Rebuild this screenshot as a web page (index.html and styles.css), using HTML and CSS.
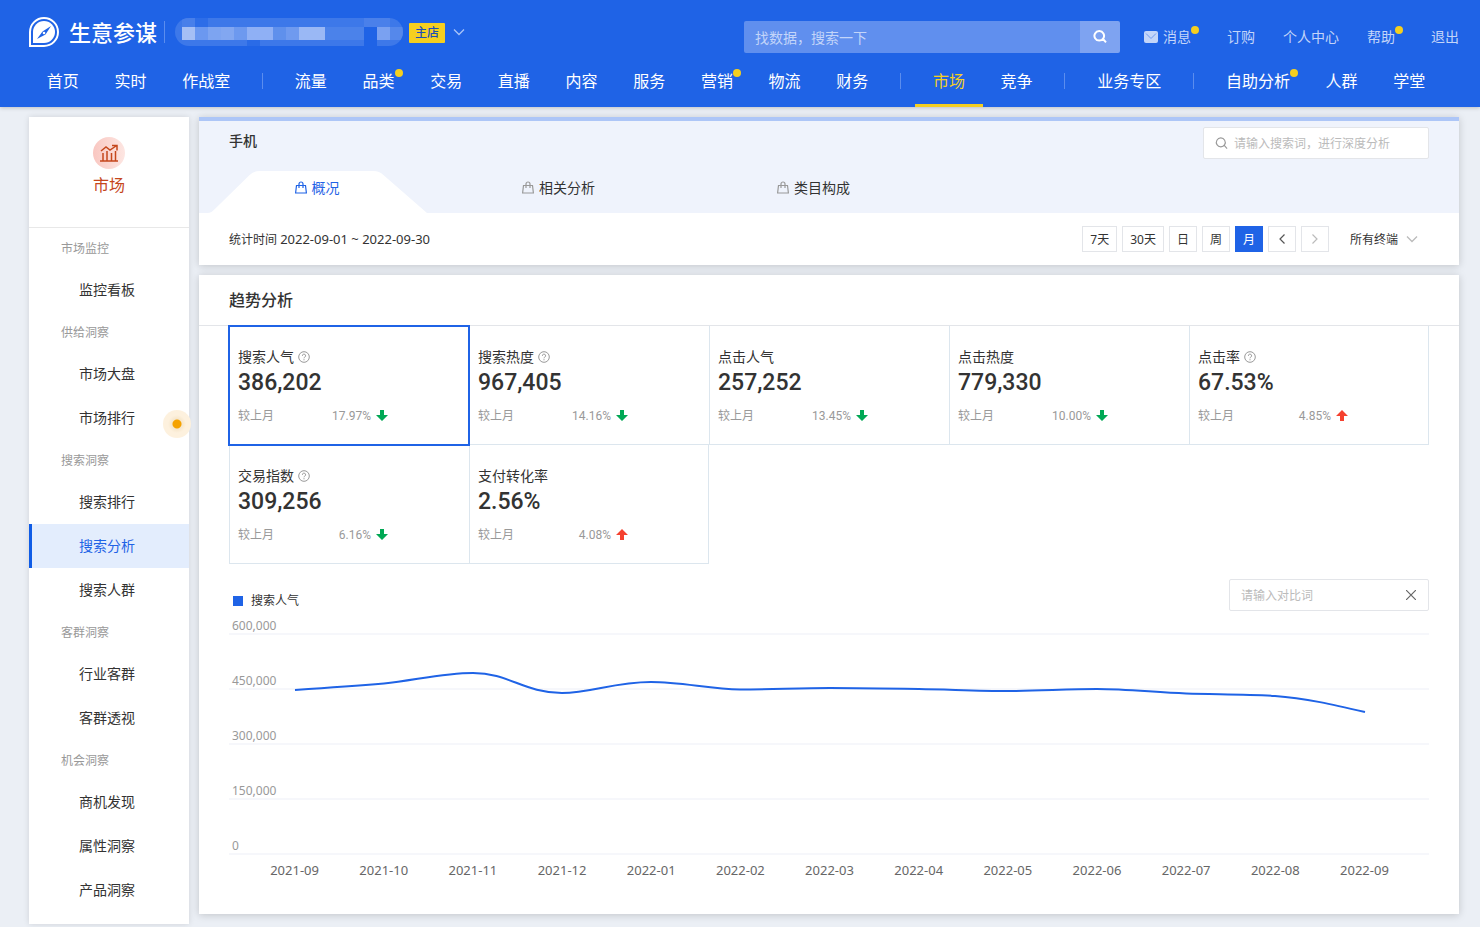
FILE: index.html
```html
<!DOCTYPE html>
<html lang="zh-CN">
<head>
  <meta charset="UTF-8">
  <title>生意参谋 - 搜索分析</title>
  <link rel="stylesheet" href="styles.css">
</head>
<body>
<svg class="defs" aria-hidden="true">
  <symbol id="bag" viewBox="0 0 12 13">
    <path d="M1.5 4.5h9l.9 7.5H.6z M4 7V3a2 2 0 0 1 4 0v4" fill="none" stroke="currentColor" stroke-width="1.2"/>
  </symbol>
  <symbol id="help" viewBox="0 0 12 12">
    <circle cx="6" cy="6" r="5.3" fill="none" stroke="currentColor"/>
    <path d="M4.4 4.8a1.6 1.6 0 1 1 2.4 1.3q-.8.4-.8 1.2M6 8.2v1.1" fill="none" stroke="currentColor"/>
  </symbol>
  <symbol id="down" viewBox="0 0 12 12">
    <path d="M4 0h4v5h4L6 11 0 5h4z" fill="#00a854"/>
  </symbol>
  <symbol id="up" viewBox="0 0 12 12">
    <path d="M4 11h4V6h4L6 0 0 6h4z" fill="#f5412f"/>
  </symbol>
  <symbol id="search" viewBox="0 0 14 14">
    <path d="M10 9l3 3.400M6.200 1a4.800 4.800 0 1 0 .1 0z" fill="none" stroke="currentColor" stroke-width="var(--sw, 1.2)"/>
  </symbol>
  <symbol id="chevron" viewBox="0 0 12 8">
    <path d="M1 1.5l5 5 5-5" fill="none" stroke="currentColor" stroke-width="1.3"/>
  </symbol>
</svg>

<header class="header">
  <div class="header-top">
    <svg class="logo" viewBox="0 0 30 30">
      <path d="M1 29V15A14 14 0 1 1 15 29z" fill="none" stroke="#fff" stroke-width="2"/>
      <path d="M4 26V15a11 11 0 1 1 11 11z" fill="#fff"/>
      <path d="M22 9l-5.5 8.5-3-3z" fill="#1f63e6"/>
      <path d="M8 22l5.5-7.5 3 3z" fill="#1f63e6"/>
      <circle cx="15" cy="16" r="1.3" fill="#fff"/>
    </svg>
    <h1 class="brand">生意参谋</h1>
    <svg class="shop-name" viewBox="0 0 228 28">
      <clipPath id="pill"><rect width="228" height="28" rx="14"/></clipPath>
      <g clip-path="url(#pill)">
        <rect width="228" height="28" fill="#3d78e9"/>
        <rect x="20" width="13" height="9" fill="#2d6de8"/>
        <rect x="7" width="13" height="9" fill="#487fea"/>
        <rect x="189" width="26" height="9" fill="#4a80ea"/>
        <rect x="7" y="9" width="13" height="13" fill="#a5bff5"/>
        <rect x="20" y="9" width="13" height="13" fill="#6b98f0"/>
        <rect x="33" y="9" width="13" height="13" fill="#7da4f1"/>
        <rect x="46" y="9" width="26" height="13" fill="#82a7f1"/>
        <rect x="59" y="9" width="13" height="13" fill="#6d99ef"/>
        <rect x="72" y="9" width="26" height="13" fill="#8fb0f5"/>
        <rect x="98" y="9" width="13" height="13" fill="#5f90ec"/>
        <rect x="111" y="9" width="13" height="13" fill="#6f9aef"/>
        <rect x="124" y="9" width="26" height="13" fill="#9ab8f5"/>
        <rect x="150" y="9" width="52" height="13" fill="#4b82ea"/>
        <rect x="189" y="9" width="13" height="19" fill="#1f63e6"/>
        <rect x="202" y="9" width="13" height="13" fill="#7aa1f1"/>
        <rect x="215" y="9" width="13" height="13" fill="#5588eb"/>
        <rect x="72" y="22" width="13" height="6" fill="#2a6be7"/>
      </g>
    </svg>
    <span class="shop-badge">主店</span>
    <button class="shop-toggle" aria-label="切换店铺"><svg class="chev"><use href="#chevron"/></svg></button>

    <form class="search">
      <input type="text" placeholder="找数据，搜索一下" aria-label="找数据">
      <button type="button" aria-label="搜索"><svg><use href="#search"/></svg></button>
    </form>
    <nav class="links">
      <a href="#" class="notice">
        <svg viewBox="0 0 14 12"><rect width="14" height="12" rx="2" fill="#c3d5f9"/><path d="M2 2.5l5 5 5-5" fill="none" stroke="#6f9aef"/></svg>
        <span class="dot">消息</span>
      </a>
      <a href="#">订购</a>
      <a href="#">个人中心</a>
      <a href="#" class="notice"><span class="dot">帮助</span></a>
      <a href="#">退出</a>
    </nav>
  </div>
  <nav class="main-nav">
    <a href="#">首页</a>
    <a href="#">实时</a>
    <a href="#">作战室</a>
    <i></i>
    <a href="#">流量</a>
    <a href="#"><span class="dot">品类</span></a>
    <a href="#">交易</a>
    <a href="#">直播</a>
    <a href="#">内容</a>
    <a href="#">服务</a>
    <a href="#"><span class="dot">营销</span></a>
    <a href="#">物流</a>
    <a href="#">财务</a>
    <i></i>
    <a href="#" class="active">市场</a>
    <a href="#">竞争</a>
    <i></i>
    <a href="#">业务专区</a>
    <i></i>
    <a href="#"><span class="dot">自助分析</span></a>
    <a href="#">人群</a>
    <a href="#">学堂</a>
  </nav>
</header>

<div class="page">
  <aside class="sidebar">
    <div class="side-head">
      <svg viewBox="0 0 32 32">
        <defs><linearGradient id="pink"><stop offset="0" stop-color="#f9c7c1"/><stop offset="1" stop-color="#fde6e2"/></linearGradient></defs>
        <circle cx="16" cy="16" r="16" fill="url(#pink)"/>
        <path d="M7 24h18M10 24v-8M14 24v-10M18.500 24v-8M22.500 24v-10M8 14l5-4 4 3 6-4M19 8.500h5v5" fill="none" stroke="#c5471c" stroke-width="1.500"/>
      </svg>
      <span>市场</span>
    </div>
    <nav class="side-nav">
      <h2>市场监控</h2>
      <a href="#">监控看板</a>
      <h2>供给洞察</h2>
      <a href="#">市场大盘</a>
      <a href="#" class="pulse">市场排行</a>
      <h2>搜索洞察</h2>
      <a href="#">搜索排行</a>
      <a href="#" class="active">搜索分析</a>
      <a href="#">搜索人群</a>
      <h2>客群洞察</h2>
      <a href="#">行业客群</a>
      <a href="#">客群透视</a>
      <h2>机会洞察</h2>
      <a href="#">商机发现</a>
      <a href="#">属性洞察</a>
      <a href="#">产品洞察</a>
    </nav>
  </aside>

  <main class="main">
    <section class="card overview">
      <div class="overview-head">
        <div class="overview-title">
          <h2>手机</h2>
          <label class="word-search">
            <svg><use href="#search"/></svg>
            <input type="text" placeholder="请输入搜索词，进行深度分析" aria-label="搜索词">
          </label>
        </div>
        <div class="tabs">
          <button class="tab active">
            <svg class="tab-bg" viewBox="0 0 222 42" preserveAspectRatio="none"><path d="M0 42C4 42 6 40 9 37L43 4Q47 0 53 0H168Q174 0 178 4L222 42z" fill="#fff"/></svg>
            <svg class="bag"><use href="#bag"/></svg><span>概况</span>
          </button>
          <button class="tab"><svg class="bag"><use href="#bag"/></svg><span>相关分析</span></button>
          <button class="tab"><svg class="bag"><use href="#bag"/></svg><span>类目构成</span></button>
        </div>
      </div>
      <div class="filters">
        <span class="period">统计时间 <time>2022-09-01 ~ 2022-09-30</time></span>
        <div class="ranges">
          <button>7天</button>
          <button>30天</button>
          <button>日</button>
          <button>周</button>
          <button class="active">月</button>
          <button aria-label="上一月"><svg viewBox="0 0 8 12"><path d="M6.500 1.500L2 6l4.500 4.500" fill="none" stroke="#555" stroke-width="1.200"/></svg></button>
          <button aria-label="下一月"><svg viewBox="0 0 8 12"><path d="M1.500 1.500L6 6l-4.500 4.500" fill="none" stroke="#bbb" stroke-width="1.200"/></svg></button>
        </div>
        <div class="terminal">
          <select aria-label="终端"><option>所有终端</option></select>
          <svg class="chev"><use href="#chevron"/></svg>
        </div>
      </div>
    </section>

    <section class="card trend">
      <h2 class="trend-title">趋势分析</h2>
      <div class="metrics">
        <button class="metric active">
          <span class="name">搜索人气<svg><use href="#help"/></svg></span>
          <strong>386,202</strong>
          <span class="compare">较上月<em>17.97%</em><svg><use href="#down"/></svg></span>
        </button>
        <button class="metric">
          <span class="name">搜索热度<svg><use href="#help"/></svg></span>
          <strong>967,405</strong>
          <span class="compare">较上月<em>14.16%</em><svg><use href="#down"/></svg></span>
        </button>
        <button class="metric">
          <span class="name">点击人气</span>
          <strong>257,252</strong>
          <span class="compare">较上月<em>13.45%</em><svg><use href="#down"/></svg></span>
        </button>
        <button class="metric">
          <span class="name">点击热度</span>
          <strong>779,330</strong>
          <span class="compare">较上月<em>10.00%</em><svg><use href="#down"/></svg></span>
        </button>
        <button class="metric end">
          <span class="name">点击率<svg><use href="#help"/></svg></span>
          <strong>67.53%</strong>
          <span class="compare">较上月<em>4.85%</em><svg><use href="#up"/></svg></span>
        </button>
        <button class="metric">
          <span class="name">交易指数<svg><use href="#help"/></svg></span>
          <strong>309,256</strong>
          <span class="compare">较上月<em>6.16%</em><svg><use href="#down"/></svg></span>
        </button>
        <button class="metric end">
          <span class="name">支付转化率</span>
          <strong>2.56%</strong>
          <span class="compare">较上月<em>4.08%</em><svg><use href="#up"/></svg></span>
        </button>
      </div>

      <div class="chart-bar">
        <span class="legend">搜索人气</span>
        <div class="compare-word">
          <input type="text" placeholder="请输入对比词" aria-label="对比词">
          <button aria-label="清空"><svg viewBox="0 0 10 10"><path d="M0 0l10 10M10 0L0 10" fill="none" stroke="#666" stroke-width="1.200"/></svg></button>
        </div>
      </div>
      <div class="plot">
        <div class="grid-row first">600,000</div>
        <div class="grid-row">450,000</div>
        <div class="grid-row">300,000</div>
        <div class="grid-row">150,000</div>
        <div class="grid-row">0</div>
        <svg class="line" viewBox="0 0 1200 220" preserveAspectRatio="none">
          <path d="M66 56C96 54 125 52 155 49.500C185 46.500 214 39 244 39C280 39 295 59 333 59C362 59 385 48 422 48C452 48 481 55 511 55.500C541 55.500 571 54 601 54C630 54 660 54.500 690 55C720 55.500 750 57 779 57C809 57 838 55 868 55C898 55 927 58.500 957 59.500C987 60.500 1017 60 1046 62C1076 64 1106 71 1136 78"/>
        </svg>
      </div>
      <div class="months">
        <span>2021-09</span><span>2021-10</span><span>2021-11</span><span>2021-12</span><span>2022-01</span><span>2022-02</span><span>2022-03</span><span>2022-04</span><span>2022-05</span><span>2022-06</span><span>2022-07</span><span>2022-08</span><span>2022-09</span>
      </div>
    </section>
  </main>
</div>
</body>
</html>
```
FILE: styles.css
```css
* { box-sizing: border-box; }

body {
  margin: 0;
  background: #ebeff5;
  color: #333;
  font-family: "Noto Sans", "Noto Sans CJK SC", sans-serif;
  font-size: 14px;
}

a { color: inherit; text-decoration: none; }
h1, h2 { margin: 0; font-weight: 400; }
svg { display: block; flex: none; }

button, input, select {
  margin: 0;
  padding: 0;
  border: none;
  background: none;
  font: inherit;
  color: inherit;
}

button { cursor: pointer; }
input { outline: none; min-width: 0; }

.defs { display: none; }
.chev { width: 12px; height: 8px; }

/* header */
.header {
  background: #1f63e6;
  color: #fff;
  box-shadow: 0 1px 4px rgba(0, 0, 0, 0.2);
}

.header-top {
  display: flex;
  align-items: center;
  height: 55px;
  padding: 9px 21px 0 29px;
}

.logo { width: 30px; height: 30px; }

.brand {
  margin-left: 10px;
  padding-right: 7px;
  border-right: 1px solid #5b8dee;
  font-size: 22px;
  font-weight: 500;
  line-height: 22px;
}

.shop-name { width: 228px; height: 28px; margin-left: 10px; }

.shop-badge {
  margin: 2px 0 0 6px;
  padding: 0 6px;
  border-radius: 1px;
  background: #f5cf1f;
  color: #1c4fb8;
  font-size: 12px;
  font-weight: 500;
  line-height: 20px;
}

.shop-toggle { margin-left: 8px; color: #a9c4f7; }

.search {
  display: flex;
  width: 376px;
  height: 32px;
  margin: 10px 0 0 auto;
  border-radius: 2px;
  overflow: hidden;
}

.search input {
  flex: 1;
  padding: 0 11px;
  background: #608fee;
}

.search input::placeholder { color: #c3d5f9; opacity: 1; }

.search button {
  display: flex;
  align-items: center;
  justify-content: center;
  width: 40px;
  background: #7ea3f1;
}

.search svg { width: 14px; height: 14px; --sw: 2; }

.links {
  display: flex;
  gap: 28px;
  margin: 10px 0 0 24px;
  color: #c3d5f9;
  line-height: 20px;
}

.notice { display: flex; align-items: center; gap: 5px; margin-right: 8px; }
.notice svg { width: 14px; height: 12px; }

.dot { position: relative; }

.dot::after {
  content: "";
  position: absolute;
  top: -1px;
  right: -8px;
  width: 8px;
  height: 8px;
  border-radius: 50%;
  background: #f5cf1f;
}

.main-nav {
  display: flex;
  align-items: center;
  height: 52px;
  padding: 0 37px 0 29px;
  font-size: 16px;
}

.main-nav a {
  flex: 1 1 auto;
  height: 52px;
  border-bottom: 3px solid transparent;
  line-height: 52px;
  text-align: center;
}

.main-nav a.active { color: #f5cf1f; border-color: #f5cf1f; }
.main-nav i { width: 1px; height: 16px; margin: 0 14px; background: #5b8dee; }

/* layout */
.page {
  display: flex;
  align-items: flex-start;
  gap: 10px;
  padding: 10px 21px 3px 29px;
}

.sidebar {
  flex: none;
  width: 160px;
  padding-bottom: 12px;
  background: #fff;
  box-shadow: 0 0 6px rgba(0, 0, 0, 0.12);
}

.side-head {
  display: flex;
  flex-direction: column;
  align-items: center;
  height: 111px;
  padding-top: 20px;
  border-bottom: 1px solid #e8e8e8;
  color: #c5471c;
  font-size: 16px;
  line-height: 32px;
}

.side-head svg { width: 32px; height: 32px; }

.side-nav h2 {
  height: 40px;
  padding-left: 32px;
  color: #999;
  font-size: 12px;
  line-height: 42px;
}

.side-nav a {
  display: block;
  padding-left: 50px;
  line-height: 44px;
}

.side-nav a.active {
  padding-left: 47px;
  border-left: 3px solid #0f5ce6;
  background: #e3edfd;
  color: #1f63e6;
}

.pulse { position: relative; }

.pulse::after {
  content: "";
  position: absolute;
  top: 14px;
  right: -2px;
  width: 28px;
  height: 28px;
  border-radius: 50%;
  background: radial-gradient(circle, #f5a200 4px, #f6e6cb 5px, #fdf1de 9px);
}

.main { flex: 1; min-width: 0; }

.card {
  margin-bottom: 10px;
  background: #fff;
  box-shadow: 0 1px 8px rgba(0, 0, 0, 0.18);
}

/* overview */
.overview-head {
  border-top: 4px solid #adc6f7;
  background: #eff3fc;
}

.overview-title {
  display: flex;
  justify-content: space-between;
  height: 50px;
  padding: 6px 30px 0;
}

.overview-title h2 { font-size: 14px; font-weight: 500; line-height: 28px; }

.word-search {
  display: flex;
  align-items: center;
  gap: 6px;
  width: 226px;
  height: 32px;
  padding: 0 11px;
  border: 1px solid #e3e5e9;
  border-radius: 2px;
  background: #fff;
  color: #999;
  font-size: 12px;
}

.word-search svg { width: 13px; height: 13px; }
.word-search input { flex: 1; }
.word-search input::placeholder, .compare-word input::placeholder { color: #bbb; opacity: 1; }

.tabs { display: flex; padding-left: 8px; }

.tab {
  position: relative;
  display: flex;
  align-items: center;
  justify-content: center;
  gap: 5px;
  width: 255px;
  height: 42px;
  padding-bottom: 10px;
}

.tab.active { width: 220px; margin-right: 4px; color: #1f63e6; }
.tab span { position: relative; }
.bag { position: relative; width: 12px; height: 13px; color: #999; }
.tab.active .bag { color: #1f63e6; }

.tab-bg {
  position: absolute;
  top: 0;
  left: 0;
  width: 100%;
  height: 100%;
}

.filters {
  display: flex;
  align-items: center;
  height: 52px;
  padding: 0 41px 0 30px;
  font-size: 12px;
}

.period time { font-size: 13px; }

.ranges { display: flex; gap: 5px; margin-left: auto; }

.ranges button {
  display: flex;
  align-items: center;
  justify-content: center;
  min-width: 28px;
  height: 26px;
  padding: 0 7px;
  border: 1px solid #e3e5e9;
}

.ranges button.active { border-color: #1f63e6; background: #1f63e6; color: #fff; }
.ranges svg { width: 8px; height: 12px; }

.terminal {
  display: flex;
  align-items: center;
  gap: 7px;
  margin-left: 21px;
}

.terminal select { appearance: none; }
.terminal .chev { color: #bbb; }

/* trend */
.trend { padding-bottom: 34px; }

.trend-title {
  padding: 0 30px;
  border-bottom: 1px solid #e3e5e9;
  font-size: 16px;
  font-weight: 500;
  line-height: 50px;
}

.metrics {
  display: grid;
  grid-template-columns: repeat(5, 1fr);
  margin: 0 30px;
}

.metric {
  display: flex;
  flex-direction: column;
  align-items: flex-start;
  height: 119px;
  padding: 20px 8px 0;
  border: solid #dce6ee;
  border-width: 0 0 1px 1px;
  text-align: left;
}

.metric.end { border-right-width: 1px; }
.metric.active { outline: 2px solid #1f63e6; outline-offset: -1px; z-index: 1; }

.name {
  display: flex;
  align-items: center;
  gap: 4px;
  line-height: 22px;
}

.name svg { width: 12px; height: 12px; color: #999; }

.metric strong {
  font-family: Roboto, sans-serif;
  font-size: 23px;
  font-weight: 500;
  line-height: 30px;
}

.compare {
  display: flex;
  align-items: center;
  width: 150px;
  margin-top: 9px;
  color: #999;
  font-size: 12px;
  line-height: 18px;
}

.compare em {
  margin: 0 5px 0 auto;
  font-family: Roboto, sans-serif;
  font-style: normal;
}

.compare svg { width: 12px; height: 12px; }

.chart-bar {
  display: flex;
  align-items: flex-end;
  justify-content: space-between;
  margin: 15px 30px 0;
}

.legend {
  display: flex;
  align-items: center;
  gap: 8px;
  padding-left: 4px;
  font-size: 12px;
  line-height: 20px;
}

.legend::before {
  content: "";
  width: 10px;
  height: 10px;
  background: #1f63e6;
}

.compare-word {
  display: flex;
  align-items: center;
  width: 200px;
  height: 32px;
  padding: 0 12px 0 11px;
  border: 1px solid #e3e5e9;
  border-radius: 2px;
  font-size: 12px;
}

.compare-word input { flex: 1; }
.compare-word svg { width: 10px; height: 10px; }

.plot { position: relative; margin: 0 30px; }

.grid-row {
  display: flex;
  align-items: flex-end;
  height: 55px;
  padding-left: 3px;
  border-bottom: 2px solid #f6f7fb;
  color: #999;
  font-size: 12px;
  line-height: 14px;
}

.grid-row.first { height: 24px; }

.line {
  position: absolute;
  bottom: 1px;
  left: 0;
  width: 100%;
  height: 220px;
}

.line path {
  fill: none;
  stroke: #1f63e6;
  stroke-width: 2;
  vector-effect: non-scaling-stroke;
}

.months {
  display: flex;
  margin: 5px 30px 0;
  padding: 0 20px 0 21px;
  color: #666;
  font-size: 13px;
  line-height: 20px;
}

.months span { flex: 1; text-align: center; }
```
